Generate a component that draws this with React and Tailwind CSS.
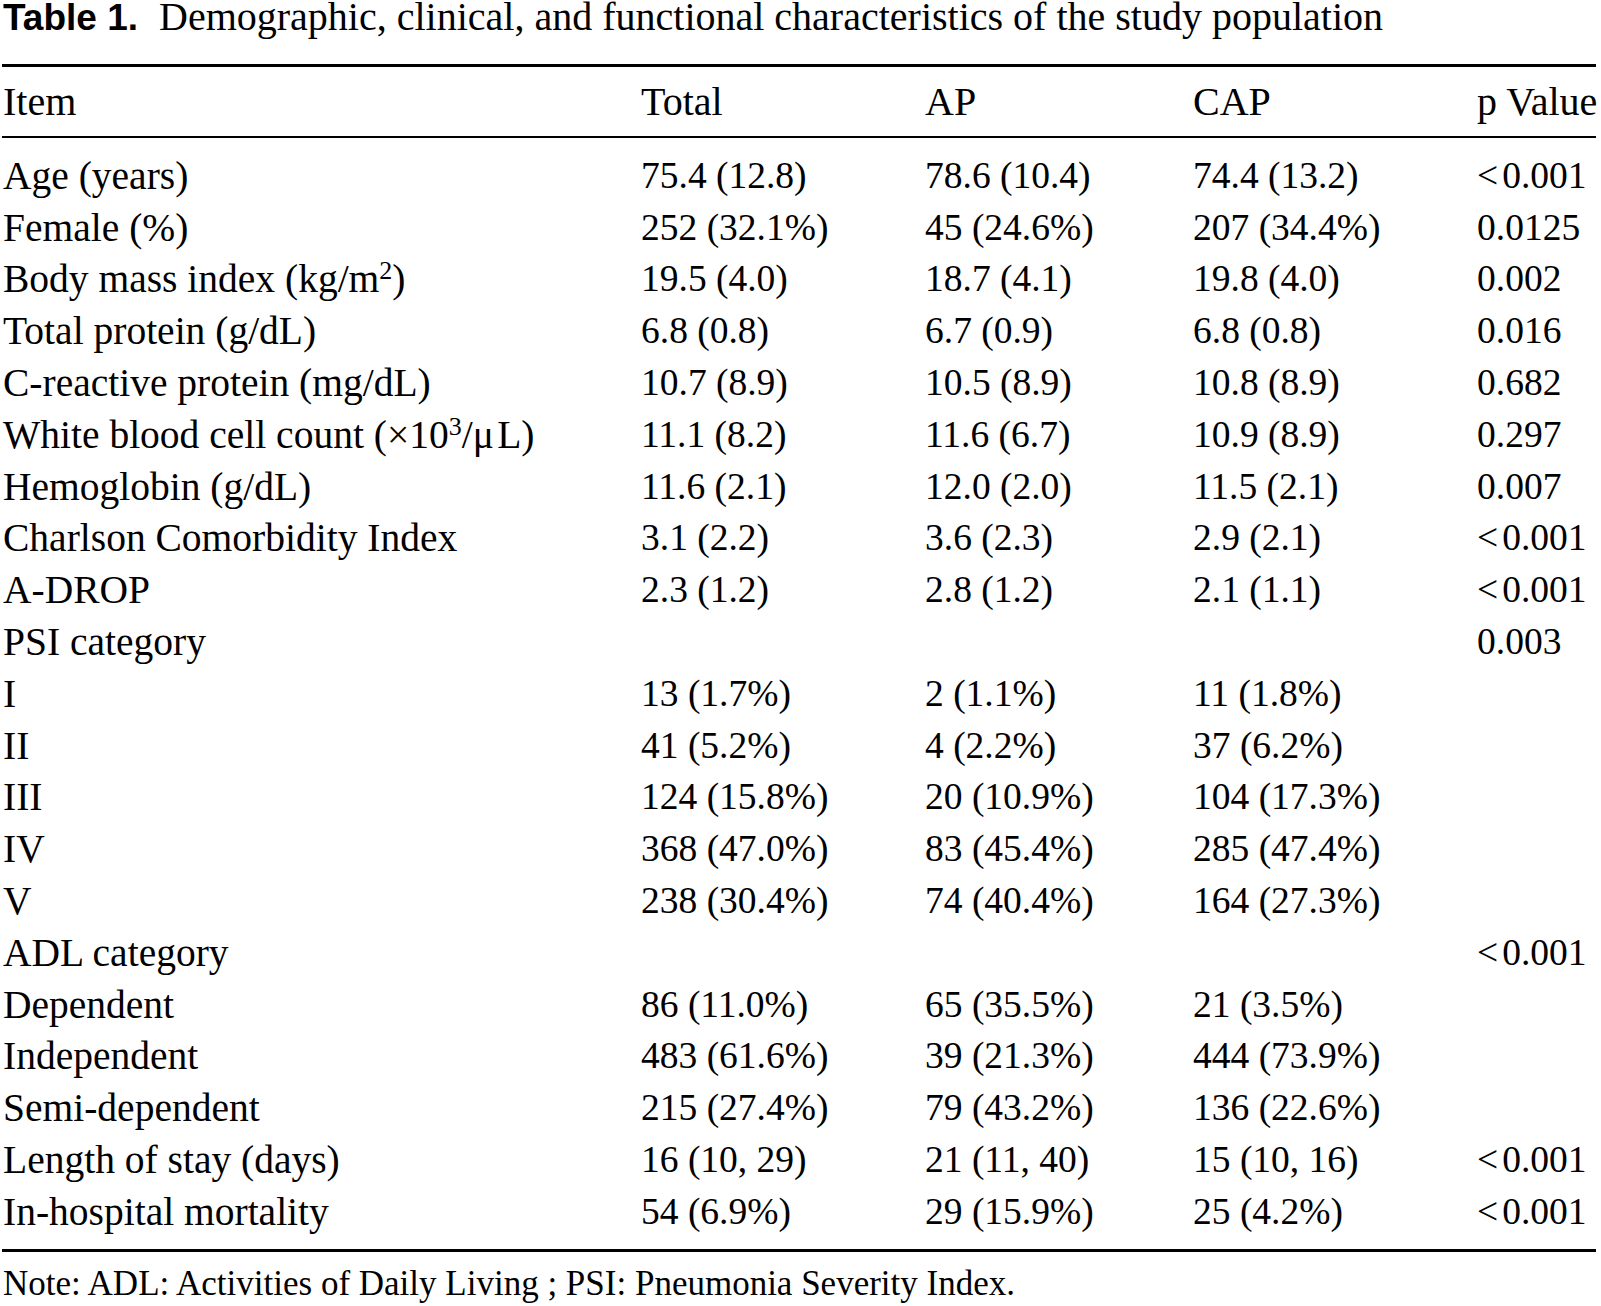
const sup = (n) => <sup className="text-[26px]">{n}</sup>;

const rows = [
  ["Age (years)", "75.4 (12.8)", "78.6 (10.4)", "74.4 (13.2)", "<0.001"],
  ["Female (%)", "252 (32.1%)", "45 (24.6%)", "207 (34.4%)", "0.0125"],
  [<>Body mass index (kg/m{sup("2")})</>, "19.5 (4.0)", "18.7 (4.1)", "19.8 (4.0)", "0.002"],
  ["Total protein (g/dL)", "6.8 (0.8)", "6.7 (0.9)", "6.8 (0.8)", "0.016"],
  ["C-reactive protein (mg/dL)", "10.7 (8.9)", "10.5 (8.9)", "10.8 (8.9)", "0.682"],
  [<>White blood cell count (×10{sup("3")}/μ{"\u200A"}L)</>, "11.1 (8.2)", "11.6 (6.7)", "10.9 (8.9)", "0.297"],
  ["Hemoglobin (g/dL)", "11.6 (2.1)", "12.0 (2.0)", "11.5 (2.1)", "0.007"],
  ["Charlson Comorbidity Index", "3.1 (2.2)", "3.6 (2.3)", "2.9 (2.1)", "<0.001"],
  ["A-DROP", "2.3 (1.2)", "2.8 (1.2)", "2.1 (1.1)", "<0.001"],
  ["PSI category", "", "", "", "0.003"],
  ["I", "13 (1.7%)", "2 (1.1%)", "11 (1.8%)", ""],
  ["II", "41 (5.2%)", "4 (2.2%)", "37 (6.2%)", ""],
  ["III", "124 (15.8%)", "20 (10.9%)", "104 (17.3%)", ""],
  ["IV", "368 (47.0%)", "83 (45.4%)", "285 (47.4%)", ""],
  ["V", "238 (30.4%)", "74 (40.4%)", "164 (27.3%)", ""],
  ["ADL category", "", "", "", "<0.001"],
  ["Dependent", "86 (11.0%)", "65 (35.5%)", "21 (3.5%)", ""],
  ["Independent", "483 (61.6%)", "39 (21.3%)", "444 (73.9%)", ""],
  ["Semi-dependent", "215 (27.4%)", "79 (43.2%)", "136 (22.6%)", ""],
  ["Length of stay (days)", "16 (10, 29)", "21 (11, 40)", "15 (10, 16)", "<0.001"],
  ["In-hospital mortality", "54 (6.9%)", "29 (15.9%)", "25 (4.2%)", "<0.001"],
];

const cols = "grid grid-cols-[638px_284px_268px_284px_1fr] pl-[3px] w-[1596px]";

function PValue({ v }) {
  if (v.startsWith("<")) {
    return (
      <>
        <span className="mr-[4px]">&lt;</span>
        {v.slice(1)}
      </>
    );
  }
  return v;
}

export default function App() {
  return (
    <div className="w-[1601px] h-[1306px] bg-white text-black font-['Liberation_Serif',serif] overflow-hidden">
      <div className="h-[34px] leading-[34px] pl-[3px] whitespace-nowrap text-[40px]">
        <span className="font-['Liberation_Sans',sans-serif] font-bold text-[37px]">Table 1.</span>
        <span className="ml-[21px]">Demographic, clinical, and functional characteristics of the study population</span>
      </div>

      <div className="mt-[30px] ml-[2px] w-[1594px] h-[3px] bg-black" />

      <div className={`${cols} h-[69px] items-center text-[40px] leading-[44px] whitespace-nowrap`}>
        <div>Item</div>
        <div>Total</div>
        <div>AP</div>
        <div>CAP</div>
        <div>p Value</div>
      </div>

      <div className="ml-[2px] w-[1594px] h-[2px] bg-black" />

      <div className="pt-[12px] pb-[11.5px] whitespace-nowrap">
        {rows.map((r, i) => (
          <div key={i} className={`${cols} h-[51.8px] items-center leading-[44px]`}>
            <div className="text-[39.5px]">{r[0]}</div>
            <div className="text-[37.5px]">{r[1]}</div>
            <div className="text-[37.5px]">{r[2]}</div>
            <div className="text-[37.5px]">{r[3]}</div>
            <div className="text-[37.5px]">
              <PValue v={r[4]} />
            </div>
          </div>
        ))}
      </div>

      <div className="ml-[2px] w-[1594px] h-[3px] bg-black" />

      <div className="mt-[12px] pl-[3px] text-[35px] leading-[40px] whitespace-nowrap">
        Note: ADL: Activities of Daily Living ; PSI: Pneumonia Severity Index.
      </div>
    </div>
  );
}
